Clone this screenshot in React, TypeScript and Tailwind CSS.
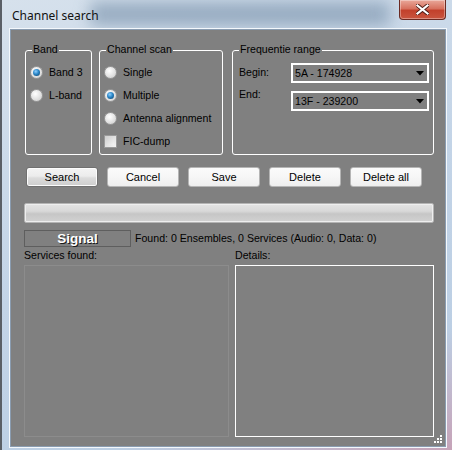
import React from "react";

function Radio({ checked, label }: { checked?: boolean; label: string }) {
  return (
    <div className="flex h-[16px] items-center">
      <div className="flex h-[13px] w-[13px] items-center justify-center rounded-full border border-[#9a9a9a] bg-[radial-gradient(circle_at_40%_35%,#ffffff,#e2e2e2_55%,#c8c8c8)]">
        {checked && (
          <div className="h-[7px] w-[7px] rounded-full bg-[radial-gradient(circle_at_40%_35%,#8fd0ff,#2a86c8_45%,#0b3a5e)]" />
        )}
      </div>
      <span className="ml-[6px] text-[10.6px] leading-[13px] text-black">{label}</span>
    </div>
  );
}

function Check({ label }: { label: string }) {
  return (
    <div className="flex h-[16px] items-center">
      <div className="h-[13px] w-[13px] border border-[#9a9a9a] bg-[linear-gradient(135deg,#cfcfcf,#f4f4f4)] p-[2px]">
        <div className="h-full w-full bg-[linear-gradient(135deg,#d4d4d4,#f2f2f2)]" />
      </div>
      <span className="ml-[6px] text-[10.6px] leading-[13px] text-black">{label}</span>
    </div>
  );
}

function Group({ title, w, children }: { title: string; w: string; children: React.ReactNode }) {
  return (
    <div className={`relative h-[105px] ${w} rounded-[3px] border border-white`}>
      <span className="absolute left-[6px] top-[-8px] bg-[#808080] px-[1px] text-[10.6px] leading-[13px] text-black">
        {title}
      </span>
      {children}
    </div>
  );
}

function Combo({ value }: { value: string }) {
  return (
    <div className="flex h-[20px] w-[138px] items-center border-2 border-white bg-[#808080] pl-[2px] pr-[3px]">
      <span className="flex-1 text-[10.6px] leading-[13px] text-black">{value}</span>
      <svg width="8" height="5" viewBox="0 0 8 5">
        <path d="M0 0 H8 L4 4.5 Z" fill="#000" />
      </svg>
    </div>
  );
}

function Btn({ label, primary }: { label: string; primary?: boolean }) {
  return (
    <div
      className={
        primary
          ? "flex h-[20px] w-[72px] items-center justify-center rounded-[3px] border border-[#707070] bg-[linear-gradient(#f4f4f4_0%,#ececec_45%,#dcdcdc_55%,#cdcdcd_100%)] text-[11px] text-black shadow-[inset_0_0_0_1px_#fcfcfc]"
          : "flex h-[20px] w-[72px] items-center justify-center rounded-[3px] border border-[#b5b5b5] bg-[linear-gradient(#fbfbfb_0%,#f6f6f6_50%,#eeeeee_100%)] text-[11px] text-black"
      }
    >
      {label}
    </div>
  );
}

export default function App() {
  return (
    <div className="relative h-[450px] w-[452px] overflow-hidden bg-[linear-gradient(160deg,#d6e1ec_0%,#c3d4e7_50%,#bccfe4_80%,#c6a3b8_100%)] font-['Liberation_Sans',Arial,sans-serif]">
      {/* blurred glass decoration */}
      <div className="pointer-events-none absolute left-[90px] top-[2px] h-[24px] w-[300px] bg-[#7f97b0] opacity-70 blur-[8px]" />
      <div className="pointer-events-none absolute left-0 top-0 h-full w-[2px] bg-[#5a5f66]" />
      <div className="relative flex h-full flex-col">
        {/* title bar */}
        <div className="flex h-[29px] items-start">
          <span className="ml-[12px] mt-[8px] font-['Noto_Sans',sans-serif] text-[12px] leading-[16px] text-[#111]">
            Channel search
          </span>
          <div className="ml-auto mr-[6px] flex h-[20px] w-[47px] items-center justify-center rounded-b-[4px] border border-t-0 border-[#6b2a22] bg-[linear-gradient(#e9a89a_0%,#d7715f_45%,#c2412c_55%,#c9553f_100%)] shadow-[inset_0_0_0_1px_rgba(255,255,255,0.35)]">
            <svg width="13" height="11" viewBox="0 0 13 11">
              <path d="M1.5 1.5 L11.5 9.5 M11.5 1.5 L1.5 9.5" stroke="#4a1a14" strokeWidth="4" strokeLinecap="square" />
              <path d="M1.5 1.5 L11.5 9.5 M11.5 1.5 L1.5 9.5" stroke="#ffffff" strokeWidth="2.2" strokeLinecap="square" />
            </svg>
          </div>
        </div>
        {/* client area */}
        <div className="relative ml-[10px] h-[418px] w-[436px] border border-[#8a9cb0] bg-[#808080] shadow-[0_0_0_1px_#f4f8fc]">
          <div className="flex flex-col pl-[13px] pt-[20px]">
            {/* group boxes */}
            <div className="ml-[1px] flex">
              <Group title="Band" w="w-[67px]">
                <div className="flex flex-col gap-[7px] pl-[4px] pt-[13px]">
                  <Radio checked label="Band 3" />
                  <Radio label="L-band" />
                </div>
              </Group>
              <div className="w-[7px]" />
              <Group title="Channel scan" w="w-[124px]">
                <div className="flex flex-col gap-[7px] pl-[4px] pt-[13px]">
                  <Radio label="Single" />
                  <Radio checked label="Multiple" />
                  <Radio label="Antenna alignment" />
                  <Check label="FIC-dump" />
                </div>
              </Group>
              <div className="w-[9px]" />
              <Group title="Frequentie range" w="w-[202px]">
                <div className="flex flex-col gap-[8px] pl-[6px] pt-[12px]">
                  <div className="flex items-start">
                    <span className="mt-[3px] w-[52px] text-[10.6px] leading-[13px] text-black">Begin:</span>
                    <Combo value="5A - 174928" />
                  </div>
                  <div className="flex items-start">
                    <span className="-mt-[3px] w-[52px] text-[10.6px] leading-[13px] text-black">End:</span>
                    <Combo value="13F - 239200" />
                  </div>
                </div>
              </Group>
            </div>
            {/* buttons */}
            <div className="ml-[2px] mt-[12px] flex gap-[9px]">
              <Btn primary label="Search" />
              <Btn label="Cancel" />
              <Btn label="Save" />
              <Btn label="Delete" />
              <Btn label="Delete all" />
            </div>
            {/* progress */}
            <div className="mt-[16px] h-[20px] w-[410px] rounded-[2px] border border-[#b4b4b4] bg-[linear-gradient(#e4e4e4_0%,#d8d8d8_40%,#c6c6c6_55%,#d2d2d2_100%)] shadow-[inset_0_0_0_1px_#eeeeee]" />
            {/* signal row */}
            <div className="mt-[7px] flex items-center">
              <div className="flex h-[17px] w-[107px] items-center justify-center border border-[#5e5e5e] bg-[#808080]">
                <span className="text-[13.5px] font-bold leading-[15px] text-white [text-shadow:1px_1px_0_#1a1a1a]">
                  Signal
                </span>
              </div>
              <span className="ml-[4px] text-[10.6px] leading-[13px] text-black">
                Found: 0 Ensembles, 0 Services (Audio: 0, Data: 0)
              </span>
            </div>
            {/* labels */}
            <div className="mt-[2px] flex">
              <span className="w-[211px] text-[10.6px] leading-[13px] text-black">Services found:</span>
              <span className="text-[10.6px] leading-[13px] text-black">Details:</span>
            </div>
            {/* lists */}
            <div className="mt-[3px] flex">
              <div className="h-[172px] w-[205px] border border-[#8c8c8c]" />
              <div className="ml-[6px] h-[172px] w-[199px] border border-white" />
            </div>
          </div>
          {/* resize grip */}
          <svg className="absolute bottom-[2px] right-[2px]" width="10" height="10" viewBox="0 0 10 10">
            <rect x="7" y="1" width="2" height="2" fill="#fff" />
            <rect x="4" y="4" width="2" height="2" fill="#fff" />
            <rect x="7" y="4" width="2" height="2" fill="#fff" />
            <rect x="1" y="7" width="2" height="2" fill="#fff" />
            <rect x="4" y="7" width="2" height="2" fill="#fff" />
            <rect x="7" y="7" width="2" height="2" fill="#fff" />
          </svg>
        </div>
      </div>
    </div>
  );
}
